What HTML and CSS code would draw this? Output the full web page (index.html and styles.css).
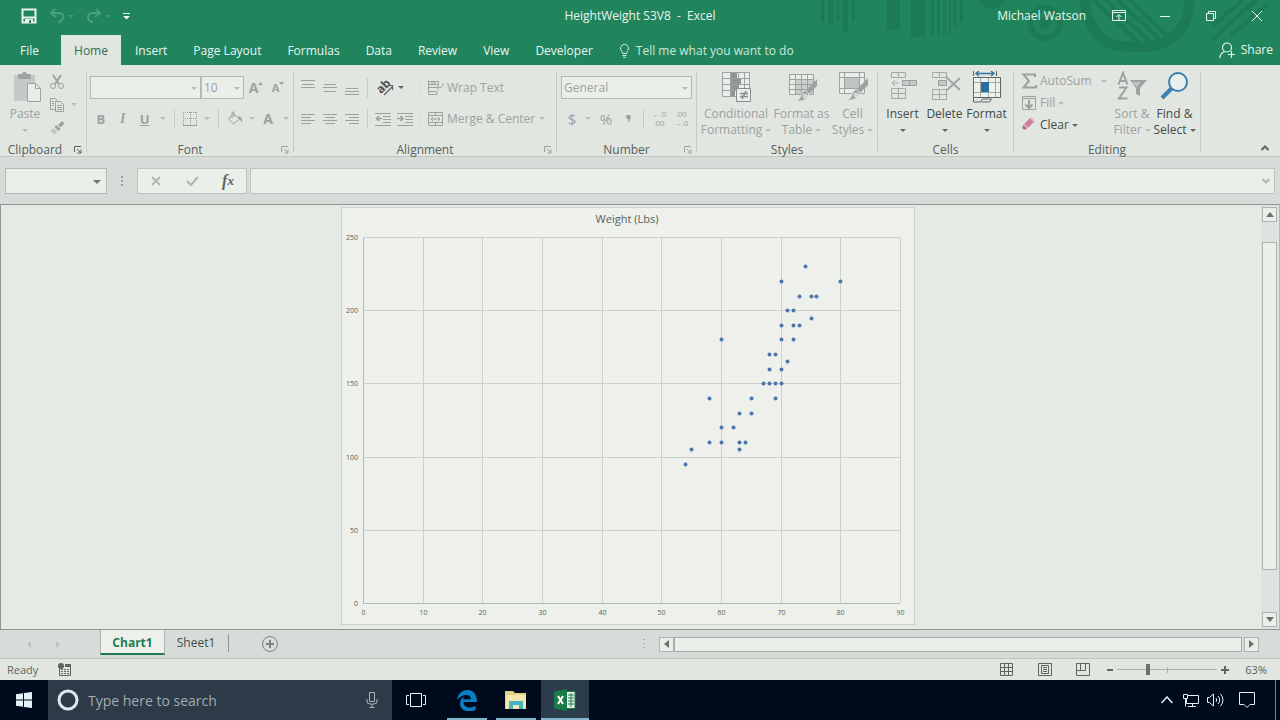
FILE: index.html
```html
<!DOCTYPE html>
<html lang="en">
<head>
<meta charset="utf-8">
<meta name="viewport" content="width=device-width, initial-scale=1">
<title>HeightWeight S3V8 - Excel</title>
<link rel="stylesheet" href="styles.css">
</head>
<body>
<div class="app">
  <header class="head">
    <svg class="head-art" width="480" height="65" viewBox="800 0 480 65" aria-hidden="true">
      <g fill="#1b7851" opacity=".75">
        <path d="M821 0h3v22h-3zM828 0h5v24h-5zM837 0h2v20h-2zM843 0h5v32h-5zM852 0h3v21h-3zM887 0h13v30h-13zM911 0h14v37h-14zM931 0h3v36h-3zM937 0h3v35h-3zM943 0h3v34h-3zM949 0h2v33h-2zM954 0h2v28h-2zM960 0h3v22h-3z"/>
        <path d="M979 0a14 14 0 0 0 26 0z"/>
        <circle cx="1045" cy="23" r="6"/>
      </g>
      <g fill="none" stroke="#1b7851" opacity=".75">
        <circle cx="1045" cy="23" r="15" stroke-width="6"/>
        <path d="M1085 0Q1088 32 1109 43Q1122 48 1150 47Q1190 38 1189 0" stroke-width="10"/>
        <path d="M1094 0l48 46M1106 0l46 44M1118 0l42 40M1130 0l37 36" stroke-width="4"/>
        <path d="M1243 0l-31 26M1256 0l-44 40M1268 4l-38 32" stroke-width="4"/>
      </g>
    </svg>
    <div class="titlebar">
      <div class="quick">
        <button class="qbtn" aria-label="Save"><svg width="16" height="16" viewBox="0 0 16 16"><path d="M1.500 1.500h13v13h-13z" fill="none" stroke="#e9f3ec" stroke-width="2"/><path d="M2 8.500h12v2H2zM4 11h8v4H4z" fill="#e9f3ec"/><path d="M8 12h2v3H8z" fill="#20855d"/></svg></button>
        <button class="qbtn dim" disabled aria-label="Undo"><svg width="16" height="16" viewBox="0 0 16 16"><path d="M6 1L2 5l5 4M2.500 5H9q5 0 5 4t-5 5" fill="none" stroke="currentColor" stroke-width="2"/></svg><i class="caret"></i></button>
        <button class="qbtn dim" disabled aria-label="Redo"><svg width="16" height="16" viewBox="0 0 16 16"><path d="M10 1l4 4-5 4M13.500 5H7Q2 5 2 9t5 5" fill="none" stroke="currentColor" stroke-width="2"/></svg><i class="caret"></i></button>
        <button class="qbtn" aria-label="Customize toolbar"><svg width="7" height="8" viewBox="0 0 7 8"><path d="M0 1h7v1H0zM0 4h7L3.500 7.500z" fill="#e9f3ec"/></svg></button>
      </div>
      <h1 class="doc">HeightWeight S3V8&nbsp; -&nbsp; Excel</h1>
      <div class="win">
        <span class="user">Michael Watson</span>
        <button class="wbtn" aria-label="Ribbon options"><svg width="14" height="12" viewBox="0 0 14 12"><path d="M.5.5h13v10H.5zM.5 2.500h13M7 10V5M4.500 7L7 4.500 9.500 7" fill="none" stroke="currentColor"/></svg></button>
        <button class="wbtn" aria-label="Minimize"><svg width="10" height="10" viewBox="0 0 10 10"><path d="M0 5.500h10" stroke="currentColor"/></svg></button>
        <button class="wbtn" aria-label="Restore"><svg width="10" height="10" viewBox="0 0 10 10"><path d="M.5 2.500h7v7h-7zM2.500 2.500v-2h7v7h-2" fill="none" stroke="currentColor"/></svg></button>
        <button class="wbtn" aria-label="Close"><svg width="10" height="10" viewBox="0 0 10 10"><path d="M0 0l10 10M10 0L0 10" stroke="currentColor"/></svg></button>
      </div>
    </div>
    <nav class="tabs">
      <button class="tab file">File</button>
      <button class="tab active">Home</button>
      <button class="tab">Insert</button>
      <button class="tab">Page Layout</button>
      <button class="tab">Formulas</button>
      <button class="tab">Data</button>
      <button class="tab">Review</button>
      <button class="tab">View</button>
      <button class="tab">Developer</button>
      <button class="tab tell"><svg width="11" height="15" viewBox="0 0 11 15"><path d="M3.500 10.500Q3.500 9 2.200 7.600A4 4 0 1 1 8.800 7.600Q7.500 9 7.500 10.500zM3.500 12.500h4M4 14.300h3" fill="none" stroke="currentColor"/></svg>Tell me what you want to do</button>
      <button class="tab share"><svg width="16" height="17" viewBox="0 0 16 17"><circle cx="8" cy="5.500" r="4.500" fill="none" stroke="currentColor" stroke-width="1.200"/><path d="M1 16q0-5 5-6.500M9 12.500h7M12.500 9v7" fill="none" stroke="currentColor" stroke-width="1.200"/></svg>Share</button>
    </nav>
  </header>

  <section class="ribbon" aria-label="Home">
    <div class="group">
      <div class="body clip">
        <button class="big off" disabled><svg width="32" height="32" viewBox="0 0 32 32"><path d="M5 4h21v26H5z" fill="#c5cac8"/><path d="M9 3h4q2.500-5 5 0h4v5H9z" fill="#9da3a2"/><path d="M18.500 12.500h8l5 5v13h-13z" fill="#e8ede8" stroke="#9da3a2"/><path d="M26.500 12.500v5h5" fill="none" stroke="#9da3a2"/></svg><span>Paste</span><span><i class="caret"></i></span></button>
        <div class="stack">
          <button class="tool off" disabled aria-label="Cut"><svg width="16" height="16" viewBox="0 0 16 16"><path d="M4 1l6 9M12 1L6 10" stroke="currentColor" stroke-width="2"/><circle cx="4" cy="12" r="2.500" fill="none" stroke="currentColor"/><circle cx="12" cy="12" r="2.500" fill="none" stroke="currentColor"/></svg></button>
          <button class="tool off" disabled aria-label="Copy"><svg width="16" height="16" viewBox="0 0 16 16"><path d="M6 12.500H1.500v-11h5l2 2M6.500 4.500h5l3 3v7h-8zM3 4.500h2M3 6.500h2M3 8.500h2M8 8.500h5M8 10.500h5M8 12.500h5" fill="none" stroke="currentColor"/></svg><i class="caret"></i></button>
          <button class="tool off" disabled aria-label="Format Painter"><svg width="16" height="16" viewBox="0 0 16 16"><path d="M13 1l2.500 2.500-4 4L9 5z" fill="currentColor"/><path d="M7.500 5l4 4-2 2-4-4z" fill="currentColor"/><path d="M4.500 8l4 4-3 3L1 11z" fill="#c5cac8"/></svg></button>
        </div>
      </div>
      <div class="label">Clipboard<svg class="launch" width="8" height="8" viewBox="0 0 8 8"><path d="M.5 6V.5H7M3 3l3.500 3.500M7 3.500V7H3.500" fill="none" stroke="currentColor"/></svg></div>
    </div>

    <div class="group">
      <div class="body rows">
        <div class="row">
          <span class="combo fontname"><select aria-label="Font" disabled><option></option></select></span><span class="combo fontsize"><select aria-label="Font size" disabled><option>10</option></select></span>
          <button class="tool off grow" disabled aria-label="Increase font size"><b>A</b><svg width="5" height="14" viewBox="0 0 5 14"><path d="M0 4l2.500-3L5 4z" fill="currentColor"/></svg></button>
          <button class="tool off shrink" disabled aria-label="Decrease font size"><b>A</b><svg width="5" height="14" viewBox="0 0 5 14"><path d="M0 1h5L2.500 4z" fill="currentColor"/></svg></button>
        </div>
        <div class="row">
          <button class="tool off" disabled><b>B</b></button>
          <button class="tool off" disabled><i class="ital">I</i></button>
          <button class="tool off" disabled><b class="under">U</b></button>
          <span class="drop off"><i class="caret"></i></span><i class="sep"></i>
          <button class="tool off" disabled aria-label="Borders"><svg width="14" height="14" viewBox="0 0 14 14"><path d="M.5 0v13M13.500 0v13M7.500 0v13M0 .5h14M0 6.500h14" stroke="currentColor" stroke-dasharray="1 1"/><path d="M0 13.500h14" stroke="currentColor"/></svg></button>
          <span class="drop off"><i class="caret"></i></span><i class="sep"></i>
          <button class="tool off wide" disabled aria-label="Fill color"><svg width="16" height="16" viewBox="0 0 16 16"><path d="M6.500 2.500l6 5.500-6 5-5-5zM5 7V1.500q2-2 2 1V6" fill="none" stroke="currentColor"/><path d="M11 5q5 1 4 7-1-3-3-4z" fill="currentColor"/></svg></button>
          <span class="drop slim off"><i class="caret"></i></span>
          <button class="tool off" disabled aria-label="Font color"><b class="fc">A</b></button>
          <span class="drop off"><i class="caret"></i></span>
        </div>
      </div>
      <div class="label">Font<svg class="launch off" width="8" height="8" viewBox="0 0 8 8"><path d="M.5 6V.5H7M3 3l3.500 3.500M7 3.500V7H3.500" fill="none" stroke="currentColor"/></svg></div>
    </div>

    <div class="group">
      <div class="body rows">
        <div class="row">
          <button class="tool off" disabled aria-label="Top align"><svg width="14" height="16" viewBox="0 0 14 16"><path d="M0 .5h14M1 4.500h12M0 7.500h14" stroke="currentColor"/></svg></button>
          <button class="tool off" disabled aria-label="Middle align"><svg width="14" height="16" viewBox="0 0 14 16"><path d="M1 4.500h12M0 7.500h14M1 11.500h12" stroke="currentColor"/></svg></button>
          <button class="tool off" disabled aria-label="Bottom align"><svg width="14" height="16" viewBox="0 0 14 16"><path d="M1 8.500h12M0 11.500h14M0 14.500h14" stroke="currentColor"/></svg></button>
          <i class="sep"></i>
          <button class="tool orient" aria-label="Orientation"><svg width="20" height="22" viewBox="0 0 20 22"><text x="2" y="14" transform="rotate(-45 8 11)" class="ab">ab</text><path d="M9 18l8-8M13 8.500h4.500V13" fill="none" stroke="#5a615e" stroke-width="1.200"/></svg><i class="caret"></i></button>
          <i class="sep faint"></i>
          <button class="tool text off" disabled><svg width="16" height="16" viewBox="0 0 16 16"><path d="M.5.5v14M.5 1.500h10v3H.5M1 7.500h12q2-1 2-4M11 5L8.500 7.500 11 10M1 11.500h8v3H1M3 3h5" fill="none" stroke="currentColor"/></svg>Wrap Text</button>
        </div>
        <div class="row">
          <button class="tool off" disabled aria-label="Align left"><svg width="14" height="12" viewBox="0 0 14 12"><path d="M0 1.500h14M0 4.500h10M0 7.500h14M0 10.500h10" stroke="currentColor"/></svg></button>
          <button class="tool off" disabled aria-label="Center"><svg width="14" height="12" viewBox="0 0 14 12"><path d="M0 1.500h14M2 4.500h10M0 7.500h14M2 10.500h10" stroke="currentColor"/></svg></button>
          <button class="tool off" disabled aria-label="Align right"><svg width="14" height="12" viewBox="0 0 14 12"><path d="M0 1.500h14M4 4.500h10M0 7.500h14M4 10.500h10" stroke="currentColor"/></svg></button>
          <i class="sep"></i>
          <button class="tool off" disabled aria-label="Decrease indent"><svg width="16" height="14" viewBox="0 0 16 14"><path d="M0 1.500h16M8 4.500h8M8 7.500h8M8 10.500h8M0 13.500h16" stroke="currentColor"/><path d="M7 6.500H2M4 4L1.500 6.500 4 9" fill="none" stroke="currentColor" stroke-width="1.500"/></svg></button>
          <button class="tool off" disabled aria-label="Increase indent"><svg width="16" height="14" viewBox="0 0 16 14"><path d="M0 1.500h16M8 4.500h8M8 7.500h8M8 10.500h8M0 13.500h16" stroke="currentColor"/><path d="M0 6.500h5M3.500 4L6 6.500 3.500 9" fill="none" stroke="currentColor" stroke-width="1.500"/></svg></button>
          <i class="sep faint"></i>
          <button class="tool text off" disabled><svg width="16" height="16" viewBox="0 0 16 16"><path d="M.5 1.500h14v13H.5zM.5 4.500h14M.5 11.500h14M7.500 1.500v3M7.500 11.500v3M3 8h9M5 6L3 8l2 2M10 6l2 2-2 2" fill="none" stroke="currentColor"/></svg>Merge &amp; Center</button>
          <span class="drop off"><i class="caret"></i></span>
        </div>
      </div>
      <div class="label">Alignment<svg class="launch off" width="8" height="8" viewBox="0 0 8 8"><path d="M.5 6V.5H7M3 3l3.500 3.500M7 3.500V7H3.500" fill="none" stroke="currentColor"/></svg></div>
    </div>

    <div class="group">
      <div class="body rows num">
        <div class="row"><span class="combo numfmt"><select aria-label="Number format" disabled><option>General</option></select></span></div>
        <div class="row">
          <button class="tool off sym" disabled>$</button><span class="drop slim off"><i class="caret"></i></span>
          <button class="tool off sym" disabled>%</button>
          <button class="tool off sym" disabled aria-label="Comma style"><svg width="5" height="8" viewBox="0 0 5 8"><path d="M0 2a2.300 2.300 0 1 1 4.800 0Q4.800 6 1 7.500 2.500 6 2.500 4.300 0 4.300 0 2z" fill="currentColor"/></svg></button>
          <i class="sep"></i>
          <button class="tool off dec" disabled><span>←.0</span><span>.00</span></button>
          <button class="tool off dec" disabled><span>.00</span><span>→.0</span></button>
        </div>
      </div>
      <div class="label">Number<svg class="launch off" width="8" height="8" viewBox="0 0 8 8"><path d="M.5 6V.5H7M3 3l3.500 3.500M7 3.500V7H3.500" fill="none" stroke="currentColor"/></svg></div>
    </div>

    <div class="group">
      <div class="body bigs">
        <button class="big off w-cond" disabled><svg width="32" height="32" viewBox="0 0 32 32"><path d="M2.500 1.500h27v24h-27zM2.500 7.500h27M2.500 13.500h27M2.500 19.500h27M10.500 1.500v24M18.500 1.500v24M24.500 1.500v24" fill="#e9eee9" stroke="currentColor"/><path d="M11 2h6v5h-6zM11 8h10v5H11zM11 14h8v5h-8zM11 20h4v5h-4z" fill="#8f9694"/><path d="M16.500 17.500h14v13h-14z" fill="#e9eee9" stroke="#858c8a"/><path d="M20 22.500h8M20 25.500h8M26 20l-4 8" stroke="#858c8a" stroke-width="1.500"/></svg><span>Conditional</span><span>Formatting<i class="caret"></i></span></button>
        <button class="big off w-tab" disabled><svg width="32" height="32" viewBox="0 0 32 32"><path d="M3.500 3.500h24v20h-24z" fill="#e9eee9" stroke="currentColor"/><path d="M10 9h17v14H10z" fill="#c9cecb"/><path d="M3 8.500h24M3 13.500h24M3 18.500h24M9.500 3v20M15.500 3v20M21.500 3v20" stroke="currentColor"/><path d="M31 8v7l-8 8-4-3z" fill="#9da3a2"/><path d="M19 19l4 4-3 4q-3 4-10 3 4-1 5-6 2-4 4-5z" fill="#9da3a2" stroke="#e1e6e1"/><circle cx="19" cy="25" r="2.500" fill="#d3d8d5"/></svg><span>Format as</span><span>Table<i class="caret"></i></span></button>
        <button class="big off w-cell" disabled><svg width="32" height="32" viewBox="0 0 32 32"><path d="M2.500 1.500h25v21h-25z" fill="#e9eee9" stroke="currentColor"/><path d="M2 6.500h25M2 17.500h25M7.500 1v21M22.500 1v21" stroke="currentColor"/><path d="M8 7h14v10H8z" fill="#c0c5c3"/><path d="M31 7v7l-8 8-4-3z" fill="#9da3a2"/><path d="M19 18l4 4-3 4q-3 4-10 3 4-1 5-6 2-4 4-5z" fill="#9da3a2" stroke="#e1e6e1"/><circle cx="19" cy="24" r="2.500" fill="#d3d8d5"/></svg><span>Cell</span><span>Styles<i class="caret"></i></span></button>
      </div>
      <div class="label">Styles</div>
    </div>

    <div class="group">
      <div class="body bigs cells">
        <button class="big"><svg width="32" height="32" viewBox="0 0 32 32"><path d="M4.500 1.500h14v5h-14zM11.500 1.500v5M4.500 17.500h14v10h-14zM4.500 22.500h14M11.500 17.500v10M5 12h7M8 9l-3 3 3 3" fill="none" stroke="#a3a9a7"/><path d="M15.500 9.500h14v5h-14z" fill="#c5cac8" stroke="#989e9c"/><path d="M22.500 9.500v5" stroke="#989e9c"/></svg><span>Insert</span><span><i class="caret"></i></span></button>
        <button class="big"><svg width="32" height="32" viewBox="0 0 32 32"><path d="M3.500 1.500h14v5h-14zM10.500 1.500v5M3.500 18.500h14v10h-14zM3.500 23.500h14M10.500 18.500v10" fill="none" stroke="#a3a9a7"/><path d="M9.500 9.500h8v5h-8z" fill="#c5cac8" stroke="#989e9c"/><path d="M17 6l14 13M31 7L18 19" stroke="#a0a6a4" stroke-width="2"/></svg><span>Delete</span><span><i class="caret"></i></span></button>
        <button class="big"><svg width="32" height="32" viewBox="0 0 32 32"><path d="M2.500 6.500h27v20h-27z" fill="#edf1ec" stroke="#606866"/><path d="M3 11.500h26M3 21.500h26M9.500 7v19M17.500 7v19M24.500 7v19" stroke="#a3a9a7"/><path d="M10 11h8v10h-8z" fill="#286f9f"/><path d="M5 2.500h18M8 0L5 2.500 8 5M20 0l3 2.500L20 5" fill="none" stroke="#2f76a5" stroke-width="1.400"/><path d="M2.500 0v5M25.500 0v5M2.500 27v4h7l2-3h9l-2 3h-8" fill="none" stroke="#606866"/></svg><span>Format</span><span><i class="caret"></i></span></button>
      </div>
      <div class="label">Cells</div>
    </div>

    <div class="group">
      <div class="body edit">
        <div class="stack lines">
          <button class="tool text off" disabled><svg width="16" height="16" viewBox="0 0 16 16"><path d="M14 4V1.500H2.500L8 8l-5.500 6.500H15V12" fill="none" stroke="currentColor" stroke-width="2"/></svg>AutoSum<i class="caret far"></i></button>
          <button class="tool text off" disabled><svg width="16" height="16" viewBox="0 0 16 16"><path d="M1.500 1.500h13v13h-13zM1.500 3.500h13" fill="none" stroke="currentColor"/><path d="M8 5v8M4.500 9.500L8 13l3.500-3.500" fill="none" stroke="currentColor" stroke-width="2"/></svg>Fill<i class="caret"></i></button>
          <button class="tool text"><svg width="16" height="16" viewBox="0 0 16 16"><path d="M9 1l4 4-6 6-4-4z" fill="#c9849b"/><path d="M9 1l2-.5 3 4L13 5z" fill="#e3b3c1"/><path d="M2.500 7.800l3.500 3.500-1.500 1.500H3l-2-2z" fill="#b9708a"/></svg>Clear<i class="caret"></i></button>
        </div>
        <button class="big off w-sort" disabled><svg width="32" height="32" viewBox="0 0 32 32"><path d="M2.500 13.500L7 2l4.500 11.500M4 10h6M3 16.500h7.500L3 27.500h8.500" fill="none" stroke="currentColor" stroke-width="2"/><path d="M14 9h17l-7 8v8l-4-2v-6z" fill="currentColor"/><path d="M16 11h9l-4 5z" fill="#c3c8c6"/></svg><span>Sort &amp;</span><span>Filter<i class="caret"></i></span></button>
        <button class="big w-find"><svg width="32" height="32" viewBox="0 0 32 32"><circle cx="19" cy="11" r="9" fill="#e9efed" stroke="#3d7fae" stroke-width="2"/><path d="M3 27l10-10" stroke="#3d7fae" stroke-width="4"/></svg><span>Find &amp;</span><span>Select<i class="caret"></i></span></button>
      </div>
      <div class="label">Editing</div>
    </div>
    <button class="collapse" aria-label="Collapse ribbon"><svg width="8" height="6" viewBox="0 0 8 6"><path d="M.5 5L4 1.500 7.500 5" fill="none" stroke="currentColor" stroke-width="2"/></svg></button>
  </section>

  <section class="formula">
    <span class="combo namebox"><input aria-label="Name box" type="text"></span>
    <span class="grip"></span>
    <div class="fx">
      <button aria-label="Cancel"><svg width="10" height="10" viewBox="0 0 10 10"><path d="M1 1l8 8M9 1L1 9" stroke="#b0b6b3" stroke-width="2"/></svg></button>
      <button aria-label="Enter"><svg width="13" height="10" viewBox="0 0 13 10"><path d="M1 5l4 4 7-8" fill="none" stroke="#b0b6b3" stroke-width="2"/></svg></button>
      <button class="fn" aria-label="Insert function"><i>f</i><i class="x">x</i></button>
    </div>
    <span class="fbox"><input aria-label="Formula bar" type="text"><svg width="8" height="6" viewBox="0 0 8 6"><path d="M.5 1L4 4.500 7.500 1" fill="none" stroke="#b0b6b3" stroke-width="2"/></svg></span>
  </section>

  <main class="work">
    <div class="canvas"><svg id="chart" class="chart" viewBox="0 0 574 418" role="img" aria-label="Weight (Lbs) scatter chart"></svg></div>
    <div class="vscroll">
      <button class="sbtn" aria-label="Scroll up"><svg width="8" height="5" viewBox="0 0 8 5"><path d="M0 5l4-5 4 5z" fill="currentColor"/></svg></button>
      <div class="vtrack"><div class="vthumb"></div></div>
      <button class="sbtn" aria-label="Scroll down"><svg width="8" height="5" viewBox="0 0 8 5"><path d="M0 0h8L4 5z" fill="currentColor"/></svg></button>
    </div>
  </main>

  <div class="sheets">
    <div class="nav"><svg width="4" height="7" viewBox="0 0 4 7"><path d="M4 0v7L0 3.500z" fill="#bcc2be"/></svg><svg width="4" height="7" viewBox="0 0 4 7"><path d="M0 0v7l4-3.500z" fill="#bcc2be"/></svg></div>
    <button class="sheet on">Chart1</button>
    <button class="sheet">Sheet1</button>
    <button class="add" aria-label="New sheet"><svg width="16" height="16" viewBox="0 0 16 16"><circle cx="8" cy="8" r="7.500" fill="none" stroke="#7c8380"/><path d="M4 8h8M8 4v8" stroke="#7c8380" stroke-width="2"/></svg></button>
    <div class="hscroll">
      <span class="grip"></span>
      <button class="sbtn" aria-label="Scroll left"><svg width="5" height="8" viewBox="0 0 5 8"><path d="M5 0v8L0 4z" fill="currentColor"/></svg></button>
      <div class="hthumb"></div>
      <button class="sbtn" aria-label="Scroll right"><svg width="5" height="8" viewBox="0 0 5 8"><path d="M0 0v8l5-4z" fill="currentColor"/></svg></button>
    </div>
  </div>

  <footer class="status">
    <span class="ready">Ready</span>
    <svg width="14" height="13" viewBox="0 0 14 13"><path d="M1.500 5v7.500h11v-11H7" fill="none" stroke="#5d6562"/><path d="M7 1h6v3H7z" fill="#5d6562"/><circle cx="3" cy="3" r="3" fill="#5d6562"/><path d="M3 6.500h9M3 8.500h9M3 10.500h9" stroke="#5d6562" stroke-dasharray="2 1"/></svg>
    <div class="views">
      <button aria-label="Normal"><svg width="14" height="13" viewBox="0 0 14 13"><path d="M.5.5h12v12H.5zM4.500.5v12M8.500.5v12M.5 4.500h12M.5 8.500h12" fill="none" stroke="currentColor"/></svg></button>
      <button aria-label="Page layout"><svg width="14" height="13" viewBox="0 0 14 13"><path d="M.5.5h13v12H.5zM3.500 2.500h7v8h-7zM5 4.500h4M5 6.500h4M5 8.500h4" fill="none" stroke="currentColor"/></svg></button>
      <button aria-label="Page break"><svg width="14" height="13" viewBox="0 0 14 13"><path d="M.5.5h13v12H.5zM4.500.5v7M9.500.5v7H.5" fill="none" stroke="currentColor"/></svg></button>
    </div>
    <div class="zoom">
      <button aria-label="Zoom out"><svg width="8" height="8" viewBox="0 0 8 8"><path d="M1 4h6" stroke="currentColor" stroke-width="2"/></svg></button>
      <input type="range" min="0" max="100" value="30" aria-label="Zoom">
      <button aria-label="Zoom in"><svg width="8" height="8" viewBox="0 0 8 8"><path d="M0 4h8M4 0v8" stroke="currentColor" stroke-width="2"/></svg></button>
    </div>
    <span class="pct">63%</span>
  </footer>

  <div class="taskbar">
    <button class="start" aria-label="Start"><svg width="16" height="16" viewBox="0 0 16 16"><path d="M0 2.200l7-1v6.300H0zM8 1l8-1v7.500H8zM0 8.500h7v6.300l-7-1zM8 8.500h8V16l-8-1z" fill="#e4f2f8"/></svg></button>
    <label class="search"><svg width="22" height="22" viewBox="0 0 22 22"><circle cx="11" cy="11" r="9" fill="none" stroke="#dfe9ec" stroke-width="3"/></svg><input type="text" placeholder="Type here to search"><svg width="12" height="16" viewBox="0 0 12 16"><path d="M3.500.5h5v9h-5zM1 7v2q0 3 3 3h4q3 0 3-3V7M6 12v3.500M3.500 15.500h5" fill="none" stroke="#aab4b9"/></svg></label>
    <button class="task" aria-label="Task view"><svg width="20" height="14" viewBox="0 0 20 14"><path d="M4.500.5h11v13h-11zM3 2.500H.5v9H3M17 2.500h2.500v9H17" fill="none" stroke="#e2eef2"/></svg></button>
    <button class="task open edge" aria-label="Edge"><svg width="20" height="21" viewBox="0 0 20 21"><path d="M0 10C1 3 6 0 10.500 0 17 0 20 5 20 12H6.500c0 4 3 5.500 6 5.500 2.500 0 4.500-.6 6-1.500v4c-2 .8-4 1.200-6.500 1.200C6 21.200 3 17.500 3 14c0-4 2-6.500 5-8-1.200 1-1.700 2-1.800 3.300h7.600C13.800 6.500 12.500 5 9.500 5 5.500 5 2 7 0 10z" fill="#0a80c4"/></svg></button>
    <button class="task open" aria-label="File Explorer"><svg width="22" height="19" viewBox="0 0 22 19"><path d="M0 0h8l2 2h11v16H0z" fill="#e4cf87"/><path d="M1 4h20v14H1z" fill="#f3e5ae"/><path d="M4 18v-7q0-1 1-1h12q1 0 1 1v7h-4v-4H8v4z" fill="#43b4c6"/></svg></button>
    <button class="task open current" aria-label="Excel"><svg width="22" height="22" viewBox="0 0 22 22"><path d="M11 2.500h10v17H11z" fill="#e8f2ec" stroke="#1c7b4b"/><path d="M14 6h6M14 9h6M14 12h6M14 15h6M17 4v14" stroke="#1c7b4b"/><path d="M0 2.500L13 0v22L0 19.500z" fill="#1a7a48"/><path d="M4 7l5 8M9 7l-5 8" stroke="#fff" stroke-width="2"/></svg></button>
    <div class="tray">
      <button aria-label="Hidden icons"><svg width="12" height="8" viewBox="0 0 12 8"><path d="M.5 7L6 1l5.500 6" fill="none" stroke="currentColor" stroke-width="1.500"/></svg></button>
      <button aria-label="Network"><svg width="16" height="14" viewBox="0 0 16 14"><path d="M5 2.500h10.500v8H3.500V6M9.500 10.500v3M5 13.500h8M.5 1.500h4v4h-4zM2.500 5.500v8" fill="none" stroke="currentColor"/></svg></button>
      <button aria-label="Volume"><svg width="17" height="14" viewBox="0 0 17 14"><path d="M.5 4.500h2L6.500 1v12l-4-3.500h-2zM9 5q1.500 2 0 4M11 3q3.500 4 0 8M13.500 1q5 6 0 12" fill="none" stroke="currentColor"/></svg></button>
      <button class="note" aria-label="Notifications"><svg width="16" height="16" viewBox="0 0 16 16"><path d="M.5.500h15v12H11l-3 3-3-3H.5z" fill="none" stroke="currentColor"/></svg></button>
      <i class="peek"></i>
    </div>
  </div>
</div>
<script src="chart.js"></script>
</body>
</html>
```
FILE: styles.css
```css
* { box-sizing: border-box; }

:root {
  --green: #20855d;
  --panel: #e1e6e1;
  --bar: #d7dcd8;
  --box: #ebefea;
  --ink: #414b48;
  --off: #9ca2a0;
  --edge: #b4bab7;
}

body {
  margin: 0;
  font-family: "Open Sans", "Noto Sans", sans-serif;
  font-size: 12px;
  line-height: 16px;
  color: var(--ink);
}

button, input, select { font: inherit; color: inherit; }

button {
  margin: 0;
  padding: 0;
  border: 0;
  background: none;
  display: flex;
  align-items: center;
  justify-content: center;
  white-space: nowrap;
}

svg { display: block; flex: none; }

.app { display: flex; flex-direction: column; min-height: 100vh; }

.caret {
  display: inline-block;
  flex: none;
  border: 3px solid transparent;
  border-top-color: currentColor;
  border-bottom-width: 0;
  opacity: .8;
}
.off .caret { opacity: .6; }

/* Title bar and ribbon tabs */
.head { position: relative; background: var(--green); color: #eaf4ee; }
.head-art { position: absolute; top: 0; right: 0; }
.titlebar {
  position: relative;
  display: grid;
  grid-template-columns: 1fr auto 1fr;
  align-items: center;
  height: 32px;
}
.quick { display: flex; align-items: center; padding-left: 21px; gap: 12px; }
.qbtn { gap: 6px; min-width: 16px; }
.qbtn.dim { color: #479f7b; gap: 3px; }
.qbtn:last-child { min-width: 7px; }
.doc { margin: 0; font-size: 12px; font-weight: 400; }
.win { display: flex; align-items: center; justify-content: flex-end; }
.user { margin-right: 10px; }
.wbtn { width: 46px; height: 32px; }
.tabs { position: relative; display: flex; align-items: stretch; height: 33px; padding-top: 3px; }
.tab { padding: 1px 13px 0; }
.tab.file { width: 61px; padding: 2px 16px 0 14px; }
.tab.active { width: 60px; margin-right: 1px; background: var(--panel); color: #2b6e50; }
.tab.tell { gap: 6px; color: #cfe6da; }
.tab.share { margin-left: auto; gap: 6px; padding: 0 7px; }

/* Ribbon */
.ribbon {
  display: grid;
  grid-template-columns: 87px 207px 263px 140px 181px 136px 187px 1fr;
  background: var(--panel);
  border-bottom: 1px solid #c3c8c5;
}
.group {
  display: flex;
  flex-direction: column;
  padding: 5px 1px 0 0;
  background: linear-gradient(#c6cbc8, #c6cbc8) right 7px / 1px 80px no-repeat;
}
.body { height: 71px; display: flex; }
.off { color: var(--off); }
.label {
  position: relative;
  height: 15px;
  padding-top: 1px;
  text-align: center;
  color: #56605c;
}
.group:first-child .label { padding-right: 16px; }
.launch { position: absolute; right: 4px; top: 5px; }
.rows { flex-direction: column; padding: 2px 0 0 3px; }
.row { display: flex; align-items: center; height: 31px; }
.tool { width: 22px; height: 22px; }
.tool.wide { width: 24px; }
.tool.orient { width: 44px; gap: 3px; justify-content: flex-start; padding-left: 3px; }
.drop { width: 14px; display: flex; justify-content: center; }
.drop.slim { width: 10px; }
.sep { width: 1px; height: 20px; margin: 0 4px; background: #c6cbc8; }
.sep.faint { opacity: .4; }
.tool.text { width: auto; gap: 3px; }
.rows .tool.text { padding-left: 3px; }
.tool b { font-size: 13px; }
.ital { font: italic bold 14px "Liberation Serif", serif; }
.under { text-decoration: underline; }
.tool .fc { font-size: 14px; }
.grow b { font-size: 14px; }
.grow { margin-left: 1px; }
.shrink b { font-size: 11px; }
.ab { font: bold 12px "Open Sans", sans-serif; fill: #4b5350; }

.combo { position: relative; display: flex; }
.combo::after {
  content: "";
  position: absolute;
  right: 4px;
  top: 50%;
  margin-top: -1px;
  border: 3px solid transparent;
  border-top-color: var(--edge);
  border-bottom: 0;
}
.combo select, .combo input {
  width: 100%;
  height: 23px;
  padding: 0 2px;
  margin: 0;
  border: 1px solid var(--edge);
  border-radius: 0;
  background: var(--box);
  appearance: none;
  outline: 0;
  opacity: 1;
  color: var(--off);
}
.fontname { width: 111px; }
.fontsize { width: 43px; }
.num { padding-left: 4px; }
.numfmt { width: 131px; }
.sym { font-size: 15px; }
.num .drop { margin-right: 2px; }
.dec { flex-direction: column; font-size: 8px; line-height: 8px; }
.dec span { height: 9px; }

.big {
  flex-direction: column;
  justify-content: flex-start;
  padding-top: 1px;
  height: 70px;
}
.big svg { margin-bottom: 3px; }
.big span { display: flex; align-items: center; gap: 3px; height: 16px; }
.clip { padding-left: 9px; }
.clip .big { width: 32px; }
.stack { display: flex; flex-direction: column; }
.clip .stack { padding-left: 8px; }
.clip .tool { justify-content: flex-start; gap: 6px; height: 23px; width: 28px; }
.bigs { justify-content: center; gap: 4px; }
.bigs.cells { gap: 0; padding-right: 2px; }
.cells .big { width: 42px; }
.w-cond { width: 69px; }
.w-tab { width: 54px; }
.w-cell { width: 40px; }
.edit { padding-left: 7px; }
.lines { width: 90px; }
.lines .tool { height: 22px; justify-content: flex-start; }
.lines .far { margin-left: 6px; }
.w-sort { width: 42px; }
.w-find { width: 43px; }
.collapse { align-self: end; justify-self: end; width: 30px; height: 16px; color: #5d6562; }

/* Formula bar */
.formula {
  display: flex;
  align-items: center;
  height: 47px;
  padding: 0 5px;
  background: var(--bar);
}
.namebox { width: 102px; color: #6a726f; }
.namebox::after { border-width: 4px; border-bottom: 0; border-top-color: #6f7774; right: 6px; }
.formula .combo input { height: 26px; }
.grip {
  width: 2px;
  height: 10px;
  margin: 0 14px;
  background: repeating-linear-gradient(#9ba19e 0 2px, transparent 2px 4px);
}
.fx { display: flex; height: 26px; width: 110px; border: 1px solid #bec4c0; background: var(--box); }
.fx button { flex: 1; }
.fn { font: bold 16px "Liberation Serif", serif; color: #5d6562; }
.fn .x { font-size: 13px; }
.fbox {
  flex: 1;
  display: flex;
  align-items: center;
  height: 26px;
  margin-left: 3px;
  padding-right: 4px;
  border: 1px solid #bec4c0;
  background: var(--box);
}
.fbox input { flex: 1; min-width: 0; height: 24px; border: 0; background: none; outline: 0; }

/* Worksheet area */
.work {
  flex: 1;
  display: flex;
  min-height: 0;
  background: #e6eae5;
  border: 1px solid #8f9693;
  border-right-color: #b4bab7;
}
.canvas { flex: 1; display: flex; justify-content: center; padding: 2px 6px 4px 0; min-width: 0; }
.chart { width: 100%; max-width: 574px; height: auto; }
.chart .area { fill: #edf0eb; stroke: #cdd2ce; }
.chart .grid { stroke: #cbd0cc; }
.chart .axis { stroke: #b2b8b4; }
.chart .tick { font-size: 7px; fill: #59615d; }
.chart .title { font-size: 11px; fill: #59615d; }
.chart .dot { fill: #4c77ab; }
.mid { text-anchor: middle; }
.end { text-anchor: end; }
.vscroll { display: flex; flex-direction: column; width: 18px; padding: 2px 2px 2px 1px; background: #dfe3df; }
.sbtn {
  width: 15px;
  height: 15px;
  flex: none;
  border: 1px solid #adb3b0;
  background: var(--box);
  color: #6a726f;
}
.vtrack { flex: 1; padding: 20px 0 42px; display: flex; }
.vthumb { flex: 1; border: 1px solid #adb3b0; background: var(--box); }

/* Sheet tabs */
.sheets { display: flex; align-items: flex-start; height: 28px; background: var(--bar); }
.nav { width: 100px; height: 28px; display: flex; align-items: center; gap: 25px; padding-left: 27px; }
.sheet { width: 64px; height: 26px; padding-right: 2px; }
.sheet + .sheet { background: linear-gradient(#8f9693, #8f9693) right 4px / 1px 18px no-repeat; }
.sheet.on {
  width: 65px;
  height: 25px;
  padding: 2px 0 0;
  font-weight: 700;
  color: #217c55;
  background: #edf0eb;
  border: 1px solid #adb3b0;
  border-top: 0;
  border-bottom: 2px solid #217c55;
}
.add { width: 16px; height: 28px; margin-left: 33px; }
.hscroll { flex: 1; display: flex; align-items: center; height: 28px; max-width: 630px; margin-left: auto; margin-right: 21px; }
.hscroll .grip { background: repeating-linear-gradient(#a9afac 0 1px, transparent 1px 4px); }
.hthumb { flex: 1; height: 15px; margin-right: 2px; border: 1px solid #a5aba8; background: var(--box); }

/* Status bar */
.status {
  display: flex;
  align-items: center;
  height: 22px;
  padding: 0 13px 0 7px;
  border-top: 1px solid #bcc1be;
  background: var(--panel);
  font-size: 11px;
  color: #5d6562;
}
.ready { width: 51px; }
.views { display: flex; margin-left: auto; gap: 24px; }
.zoom { display: flex; align-items: center; margin-left: 16px; }
.zoom input {
  width: 100px;
  height: 12px;
  margin: 0 4px 0 3px;
  appearance: none;
  background:
    linear-gradient(#a9afac, #a9afac) center / 100% 1px no-repeat,
    linear-gradient(#a9afac, #a9afac) center / 1px 6px no-repeat;
}
.zoom input::-webkit-slider-thumb { appearance: none; width: 4px; height: 11px; background: #6a726f; }
.pct { margin-left: 16px; }

/* Windows taskbar */
.taskbar { display: flex; height: 40px; background: #000a1d; color: #e2eef2; }
.start { width: 48px; }
.search { display: flex; align-items: center; width: 344px; padding: 0 14px 0 9px; background: #2c3b47; }
.search input {
  flex: 1;
  min-width: 0;
  height: 32px;
  padding: 0;
  margin-left: 9px;
  border: 0;
  background: none;
  outline: 0;
  font-size: 14px;
}
.search input::placeholder { color: #a2abb0; opacity: 1; }
.task { width: 48px; }
.task.open { width: 40px; margin-left: 9px; border-bottom: 2px solid #7fb6cb; border-top: 2px solid transparent; }
.task.edge { margin-left: 7px; }
.task.current { width: 48px; margin-left: 5px; background: #2c3c4d; border-top-color: #2c3c4d; }
.tray { display: flex; margin-left: auto; }
.tray button { width: 24px; }
.tray .note { width: 40px; }
.peek { width: 1px; margin: 0 4px 0 8px; background: #7a8693; }
```
FILE: chart.js
```js
const chart = document.getElementById("chart");
const NS = "http://www.w3.org/2000/svg";

// Plot rectangle inside the chart area
const plot = { left: 22, right: 559, top: 30, bottom: 396, maxX: 90, maxY: 250 };

// [height, weight]
const points = [
  [54, 95], [55, 105], [58, 110], [60, 110], [63, 105], [63, 110], [64, 110],
  [60, 120], [62, 120], [63, 130], [65, 130], [58, 140], [65, 140], [69, 140],
  [67, 150], [68, 150], [69, 150], [70, 150], [68, 160], [70, 160], [71, 165],
  [68, 170], [69, 170], [60, 180], [70, 180], [72, 180], [70, 190], [72, 190],
  [73, 190], [75, 195], [71, 200], [72, 200], [73, 210], [75, 210], [76, 210],
  [70, 220], [80, 220], [74, 230]
];

function add(name, attrs, text) {
  const node = document.createElementNS(NS, name);
  for (const key in attrs) node.setAttribute(key, attrs[key]);
  if (text !== undefined) node.textContent = text;
  chart.appendChild(node);
}

const px = v => Math.round(plot.left + v / plot.maxX * (plot.right - plot.left)) + 0.5;
const py = v => Math.round(plot.bottom - v / plot.maxY * (plot.bottom - plot.top)) + 0.5;

add("rect", { x: 0.5, y: 0.5, width: 573, height: 417, class: "area" });
add("text", { x: 286, y: 16, class: "title mid" }, "Weight (Lbs)");

for (let v = 0; v <= plot.maxX; v += 10) {
  add("line", { x1: px(v), x2: px(v), y1: plot.top, y2: plot.bottom, class: v ? "grid" : "axis" });
  add("text", { x: px(v), y: 408, class: "tick mid" }, v);
}
for (let v = 0; v <= plot.maxY; v += 50) {
  add("line", { x1: plot.left, x2: plot.right, y1: py(v), y2: py(v), class: v ? "grid" : "axis" });
  add("text", { x: 17, y: py(v) + 2, class: "tick end" }, v);
}
for (const [h, w] of points) {
  add("circle", { cx: px(h), cy: py(w), r: 2, class: "dot" });
}
```
